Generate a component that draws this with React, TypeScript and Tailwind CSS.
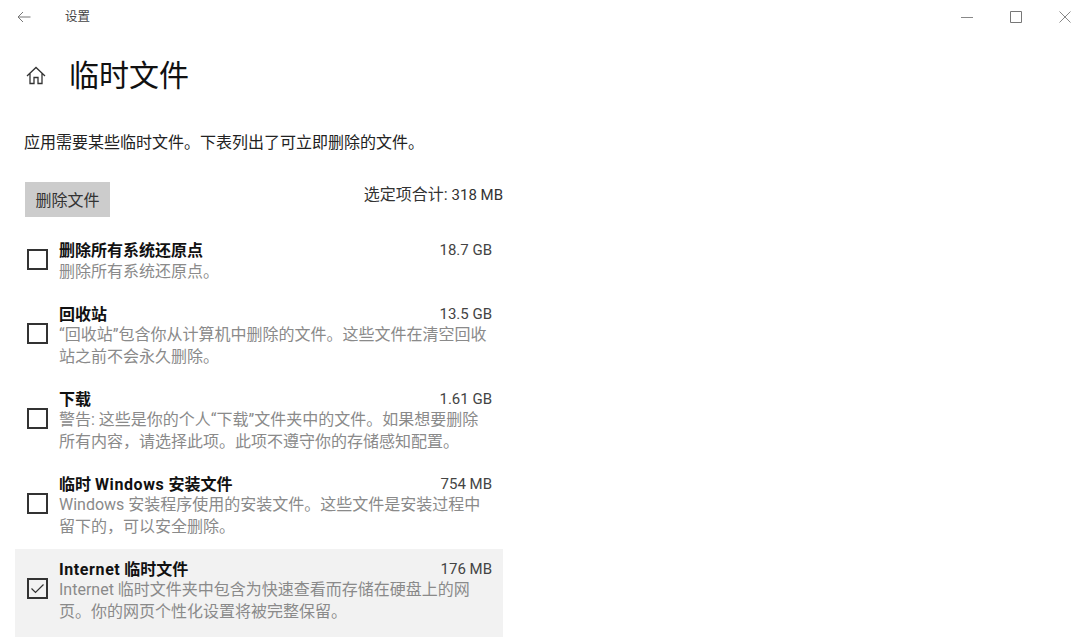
import type { ReactNode } from "react";

const FONT = "font-['Roboto','Noto_Sans_CJK_SC',sans-serif]";

type RowItem = {
  title: ReactNode;
  size: string;
  desc: string;
  checked?: boolean;
};

const ROWS: RowItem[] = [
  { title: "删除所有系统还原点", size: "18.7 GB", desc: "删除所有系统还原点。" },
  {
    title: "回收站",
    size: "13.5 GB",
    desc: "“回收站”包含你从计算机中删除的文件。这些文件在清空回收站之前不会永久删除。",
  },
  {
    title: "下载",
    size: "1.61 GB",
    desc: "警告: 这些是你的个人“下载”文件夹中的文件。如果想要删除所有内容，请选择此项。此项不遵守你的存储感知配置。",
  },
  {
    title: (
      <>
        临时 <span className="tracking-[0.6px]">Windows</span> 安装文件
      </>
    ),
    size: "754 MB",
    desc: "Windows 安装程序使用的安装文件。这些文件是安装过程中留下的，可以安全删除。",
  },
  {
    title: (
      <>
        <span className="tracking-[0.6px]">Internet</span> 临时文件
      </>
    ),
    size: "176 MB",
    desc: "Internet 临时文件夹中包含为快速查看而存储在硬盘上的网页。你的网页个性化设置将被完整保留。",
    checked: true,
  },
];

function Row({ item }: { item: RowItem }) {
  return (
    <div className={item.checked ? "bg-[#f2f2f2] pb-[5px]" : ""}>
      <div className="flex items-center pl-3 pr-[11px] pt-[10px] pb-[11.5px]">
        <div className="w-[21px] h-[21px] shrink-0 mb-[3px] border-2 border-[#333] flex items-center justify-center">
          {item.checked && (
            <svg width="15" height="15" viewBox="0 0 15 15" fill="none" stroke="#333" strokeWidth="1.2">
              <path d="M1.5 7.5 L5.5 11.5 L13.5 3.5" />
            </svg>
          )}
        </div>
        <div className="ml-[11px] flex-1 min-w-0 text-[16px] leading-[21.5px]">
          <div className="flex justify-between">
            <span className="font-bold text-[#111]">{item.title}</span>
            <span className="text-[#444] text-[15px]">{item.size}</span>
          </div>
          <div className="text-[#8a8a8a] -mt-px">{item.desc}</div>
        </div>
      </div>
    </div>
  );
}

export default function App() {
  return (
    <div className={`w-[1080px] h-[637px] overflow-hidden bg-white ${FONT}`}>
      {/* title bar */}
      <div className="h-[34px] flex items-center pl-[17px] pr-[9px]">
        <svg width="14" height="12" viewBox="0 0 14 12" fill="none" stroke="#777" strokeWidth="1">
          <path d="M13.5 6 H1 M6 1 L1 6 L6 11" />
        </svg>
        <span className="ml-[34px] text-[12.5px] text-[#444]">设置</span>
        <div className="ml-auto flex items-center gap-[37px]">
          <svg width="12" height="12" viewBox="0 0 12 12" stroke="#888" strokeWidth="1"><path d="M0 6.5 H12" /></svg>
          <svg width="12" height="12" viewBox="0 0 12 12" fill="none" stroke="#777" strokeWidth="1"><path d="M.5 .5 H11.5 V11.5 H.5 Z" /></svg>
          <svg width="12" height="12" viewBox="0 0 12 12" stroke="#888" strokeWidth="1"><path d="M.5 .5 L11.5 11.5 M11.5 .5 L.5 11.5" /></svg>
        </div>
      </div>

      {/* heading */}
      <div className="flex items-center pl-[26px] h-[52px] mt-[15px]">
        <svg width="20" height="19" viewBox="0 0 20 19" fill="none" stroke="#333" strokeWidth="1.3">
          <path d="M1 10 L10 1.5 L19 10 M4 7.5 V17.5 H8 V11.5 H12 V17.5 H16 V7.5" />
        </svg>
        <h1 className="ml-[23px] text-[30px] font-normal text-[#111]">临时文件</h1>
      </div>

      <p className="mt-[30px] pl-6 text-[16px] leading-[24px] text-[#222]">
        应用需要某些临时文件。下表列出了可立即删除的文件。
      </p>

      <div className="w-[503px] pl-[15px]">
        <div className="flex items-start justify-between mt-[27px] pl-[10px]">
          <button className="w-[85px] h-[35px] pt-[2px] bg-[#cccccc] text-[16px] text-[#333]">删除文件</button>
          <span className="text-[16px] text-[#333] leading-[26px]">
            选定项合计: <span className="text-[15px]">318 MB</span>
          </span>
        </div>
        <div className="mt-[13px]">
          {ROWS.map((r) => (
            <Row key={r.size} item={r} />
          ))}
        </div>
      </div>
    </div>
  );
}
